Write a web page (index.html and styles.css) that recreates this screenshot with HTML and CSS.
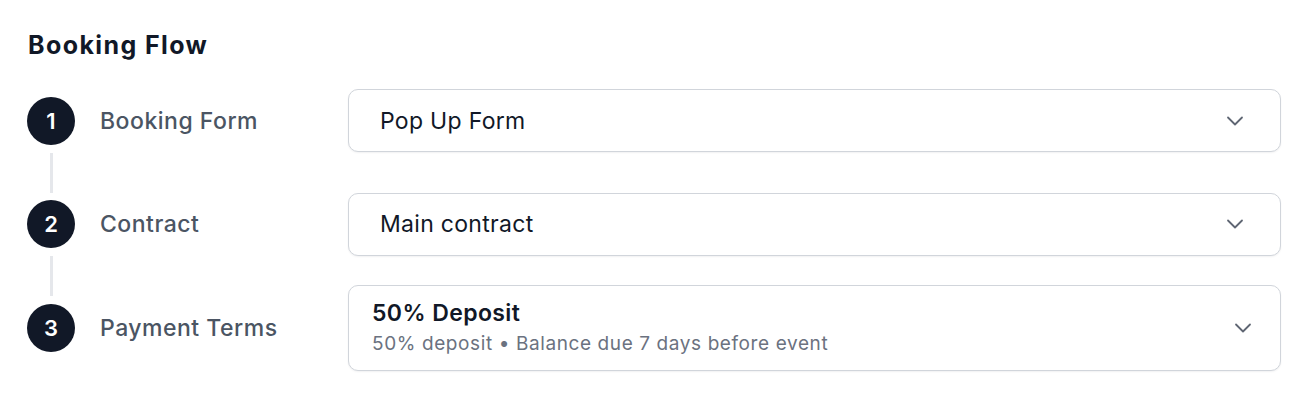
FILE: index.html
```html
<!DOCTYPE html>
<html lang="en">
<head>
<meta charset="utf-8">
<title>Booking Flow</title>
<link rel="stylesheet" href="styles.css">
</head>
<body>
<main class="page">
  <h2 class="title">Booking Flow</h2>
  <div class="flow">
    <div class="step">
      <div class="marker">1</div>
      <div class="label">Booking Form</div>
      <div class="select">
        <div class="value">Pop Up Form</div>
        <svg class="chevron" viewBox="0 0 18 10" width="18" height="10"><path d="M2 1.5 L9 8.5 L16 1.5"/></svg>
      </div>
    </div>
    <div class="connector"><span class="line"></span></div>
    <div class="step">
      <div class="marker">2</div>
      <div class="label">Contract</div>
      <div class="select">
        <div class="value">Main contract</div>
        <svg class="chevron" viewBox="0 0 18 10" width="18" height="10"><path d="M2 1.5 L9 8.5 L16 1.5"/></svg>
      </div>
    </div>
    <div class="connector"><span class="line"></span></div>
    <div class="step">
      <div class="marker">3</div>
      <div class="label">Payment Terms</div>
      <div class="select select-rich">
        <div class="value-group">
          <div class="value-title">50% Deposit</div>
          <div class="value-sub">50% deposit • Balance due 7 days before event</div>
        </div>
        <svg class="chevron" viewBox="0 0 18 10" width="18" height="10"><path d="M2 1.5 L9 8.5 L16 1.5"/></svg>
      </div>
    </div>
  </div>
</main>
</body>
</html>
```

FILE: styles.css
```css
* { box-sizing: border-box; }
html, body { margin: 0; background: #ffffff; }
body {
  min-height: 400px;
  font-family: Inter, "Noto Sans", "Liberation Sans", sans-serif;
  color: #111827;
}
.page {
  min-height: 400px;
  padding: 29px 25px 0 27px;
}
.title {
  margin: 0 0 0 1px;
  font-size: 25px;
  line-height: 32px;
  font-weight: 700;
  color: #111827;
  letter-spacing: 1.4px;
}
.flow {
  margin-top: 28px;
  display: flex;
  flex-direction: column;
}
.step {
  height: 63.5px;
  display: flex;
  align-items: center;
}
.marker {
  flex: none;
  width: 48px;
  height: 48px;
  border-radius: 50%;
  background: #111827;
  color: #ffffff;
  font-size: 22px;
  font-weight: 600;
  display: flex;
  align-items: center;
  justify-content: center;
}
.label {
  flex: none;
  width: 273px;
  padding-left: 25px;
  font-size: 23px;
  font-weight: 500;
  letter-spacing: 0.5px;
  color: #4b5563;
}
.select {
  flex: 1;
  height: 63px;
  display: flex;
  align-items: center;
  justify-content: space-between;
  padding: 0 36px 0 31px;
  border: 1.5px solid #d1d5db;
  border-radius: 10px;
  background: #ffffff;
  box-shadow: 0 1px 2px rgba(17, 24, 39, 0.06);
}
.select-rich {
  height: 86px;
  padding: 0 28px 0 23px;
}
.value {
  font-size: 23px;
  letter-spacing: 0.3px;
  color: #111827;
}
.value-group {
  display: flex;
  flex-direction: column;
  gap: 5px;
}
.value-title {
  font-size: 23px;
  line-height: 28px;
  font-weight: 600;
  letter-spacing: 0.4px;
  color: #111827;
}
.value-sub {
  font-size: 19px;
  line-height: 24px;
  letter-spacing: 0.6px;
  color: #6b7280;
}
.chevron {
  flex: none;
  fill: none;
  stroke: #5f6673;
  stroke-width: 1.8;
  stroke-linecap: round;
  stroke-linejoin: round;
}
.connector {
  height: 40px;
  padding-left: 22.5px;
}
.line {
  display: block;
  width: 3px;
  height: 100%;
  background: #e5e7eb;
}
```
